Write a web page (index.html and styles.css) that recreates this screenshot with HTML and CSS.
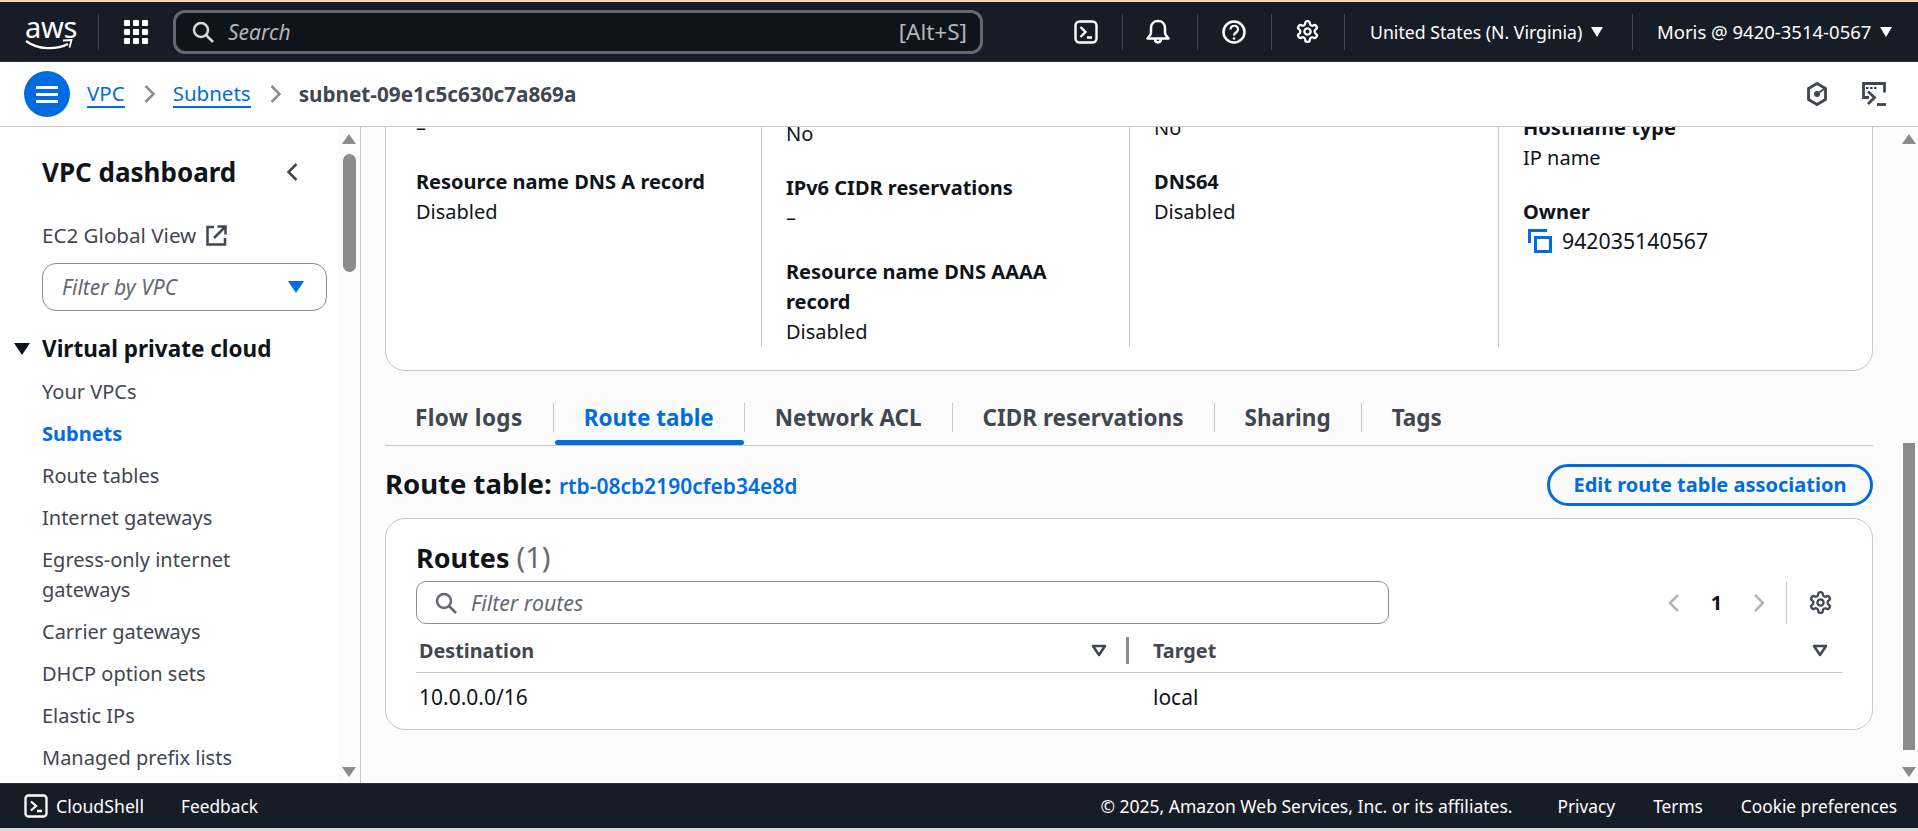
FILE: index.html
```html
<!DOCTYPE html>
<html lang="en">
<head>
    <meta charset="UTF-8">
    <title>Subnet details | VPC Console</title>
    <link rel="stylesheet" href="styles.css">
</head>
<body>
    <!-- top navigation -->
    <header class="top-nav">
        <div class="aws-logo">
            <span class="aws-word">aws</span>
            <svg class="aws-smile" width="48" height="11" viewBox="0 0 48 11"><path d="M1 2c12 9 30 9 42 3" fill="none" stroke="#fff" stroke-width="2.2"/><path d="M38 1.500l8.500-.5-2 7.500" fill="none" stroke="#fff" stroke-width="1.800"/></svg>
        </div>
        <span class="nav-sep sep-logo"></span>
        <svg class="apps-icon" width="24" height="24" viewBox="0 0 24 24" fill="#fff"><rect x="0" y="0" width="6" height="6" rx="1"/><rect x="9" y="0" width="6" height="6" rx="1"/><rect x="18" y="0" width="6" height="6" rx="1"/><rect x="0" y="9" width="6" height="6" rx="1"/><rect x="9" y="9" width="6" height="6" rx="1"/><rect x="18" y="9" width="6" height="6" rx="1"/><rect x="0" y="18" width="6" height="6" rx="1"/><rect x="9" y="18" width="6" height="6" rx="1"/><rect x="18" y="18" width="6" height="6" rx="1"/></svg>
        <div class="global-search">
            <svg width="22" height="22" viewBox="0 0 22 22" fill="none" stroke="#d5dbdb" stroke-width="2.500"><circle cx="9" cy="9" r="7"/><path d="M14 14l7 7"/></svg>
            <span class="search-text">Search</span>
            <span class="search-key">[Alt+S]</span>
        </div>
        <svg class="nav-icon icon-shell" width="24" height="24" viewBox="0 0 24 24" fill="none" stroke="#fff" stroke-width="2.400"><rect x="1.500" y="1.500" width="21" height="21" rx="4"/><path d="M6.500 7l5 5-5 5M13 17.500h5"/></svg>
        <span class="nav-sep sep-a"></span>
        <svg class="nav-icon icon-bell" width="24" height="26" viewBox="0 0 24 26" fill="none" stroke="#fff" stroke-width="2.500" stroke-linejoin="round"><path d="M12 2c-4.500 0-7 3-7 7v5c0 2-2 3.500-3.500 5.500h21C21 17.500 19 16 19 14V9c0-4-2.500-7-7-7z"/><path d="M9 20c0 4.500 6 4.500 6 0"/></svg>
        <span class="nav-sep sep-b"></span>
        <svg class="nav-icon icon-help" width="24" height="24" viewBox="0 0 24 24" fill="none" stroke="#fff" stroke-width="2.500"><circle cx="12" cy="12" r="10.500"/><path d="M8.500 9.500c0-5 7.500-5 7.500 0 0 3-4 3-4 6" stroke-width="2.200"/><circle cx="12" cy="18.500" r="1.300" fill="#fff" stroke="none"/></svg>
        <span class="nav-sep sep-c"></span>
        <svg class="nav-icon icon-gear" width="25" height="25" viewBox="0 0 24 24" fill="none" stroke="#fff" stroke-width="2.200"><path d="M12.220 2h-.44a2 2 0 0 0-2 2v.18a2 2 0 0 1-1 1.730l-.43.25a2 2 0 0 1-2 0l-.15-.08a2 2 0 0 0-2.730.73l-.22.38a2 2 0 0 0 .73 2.730l.15.1a2 2 0 0 1 1 1.720v.51a2 2 0 0 1-1 1.740l-.15.09a2 2 0 0 0-.73 2.730l.22.38a2 2 0 0 0 2.730.73l.15-.08a2 2 0 0 1 2 0l.43.25a2 2 0 0 1 1 1.730V20a2 2 0 0 0 2 2h.44a2 2 0 0 0 2-2v-.18a2 2 0 0 1 1-1.730l.43-.25a2 2 0 0 1 2 0l.15.08a2 2 0 0 0 2.730-.73l.22-.39a2 2 0 0 0-.73-2.730l-.15-.08a2 2 0 0 1-1-1.740v-.5a2 2 0 0 1 1-1.740l.15-.09a2 2 0 0 0 .73-2.730l-.22-.38a2 2 0 0 0-2.730-.73l-.15.08a2 2 0 0 1-2 0l-.43-.25a2 2 0 0 1-1-1.730V4a2 2 0 0 0-2-2z"/><circle cx="12" cy="12" r="3"/></svg>
        <span class="nav-sep sep-d"></span>
        <span class="nav-menu region">United States (N. Virginia)<i class="caret"></i></span>
        <span class="nav-sep sep-e"></span>
        <span class="nav-menu account">Moris @ 9420-3514-0567<i class="caret"></i></span>
    </header>

    <!-- breadcrumbs -->
    <div class="crumb-bar">
        <button class="menu-btn"><span></span><span></span><span></span></button>
        <a class="crumb crumb-first">VPC</a>
        <svg class="crumb-chev" width="12" height="20" viewBox="0 0 12 20" fill="none" stroke="#8c8c94" stroke-width="2.500"><path d="M1.500 2l8 8-8 8"/></svg>
        <a class="crumb">Subnets</a>
        <svg class="crumb-chev" width="12" height="20" viewBox="0 0 12 20" fill="none" stroke="#8c8c94" stroke-width="2.500"><path d="M1.500 2l8 8-8 8"/></svg>
        <span class="crumb-current">subnet-09e1c5c630c7a869a</span>
        <svg class="tool-a" width="22" height="24" viewBox="0 0 22 24" fill="none" stroke="#424650" stroke-width="2.800" stroke-linejoin="round"><path d="M11 1.500l8.500 5v11l-8.500 5-8.500-5v-11z"/><circle cx="11" cy="12" r="3" fill="#424650" stroke="none"/><path d="M11 12l7-5" stroke-width="2"/></svg>
        <svg class="tool-b" width="24" height="24" viewBox="0 0 24 24" fill="none" stroke="#424650" stroke-width="2.800"><path d="M7 15.500H1.500v-14h21v9"/><path d="M4 6h2.500M8 6h2.500M12 6h2.500" stroke-width="2"/><path d="M6 9.500l6.500 6-6.500 6.500"/><path d="M15 22.500h9"/></svg>
    </div>

    <div class="layout">
        <!-- side navigation -->
        <aside class="side-nav">
            <div class="side-content">
                <div class="side-head">
                    <h2>VPC dashboard</h2>
                    <svg width="12" height="20" viewBox="0 0 12 20" fill="none" stroke="#424650" stroke-width="2.500"><path d="M10.500 2l-8 8 8 8"/></svg>
                </div>
                <a class="ec2-link">EC2 Global View
                    <svg width="21" height="21" viewBox="0 0 21 21" fill="none" stroke="#424650" stroke-width="2.500"><path d="M8 2H1.500v17.500H19V13"/><path d="M8 13L19 2M11.500 1.500h8v8"/></svg>
                </a>
                <div class="vpc-filter"><span>Filter by VPC</span><i class="caret-blue"></i></div>
                <h3 class="side-section"><i class="caret-dark"></i>Virtual private cloud</h3>
                <ul class="side-list">
                    <li>Your VPCs</li>
                    <li class="active">Subnets</li>
                    <li>Route tables</li>
                    <li>Internet gateways</li>
                    <li>Egress-only internet gateways</li>
                    <li>Carrier gateways</li>
                    <li>DHCP option sets</li>
                    <li>Elastic IPs</li>
                    <li>Managed prefix lists</li>
                </ul>
            </div>
            <div class="scrollbar side-scroll">
                <i class="arrow-up"></i>
                <span class="thumb"></span>
                <i class="arrow-down"></i>
            </div>
        </aside>

        <!-- main content, scrolled down a bit -->
        <main class="content">
            <div class="content-inner">
                <section class="card details">
                    <div class="detail-col col-one">
                        <div class="field"><p>–</p></div>
                        <div class="field"><strong>Resource name DNS A record</strong><p>Disabled</p></div>
                    </div>
                    <div class="detail-col col-two">
                        <div class="field"><p>No</p></div>
                        <div class="field"><strong>IPv6 CIDR reservations</strong><p>–</p></div>
                        <div class="field"><strong>Resource name DNS AAAA record</strong><p>Disabled</p></div>
                    </div>
                    <div class="detail-col col-three">
                        <div class="field"><p>No</p></div>
                        <div class="field"><strong>DNS64</strong><p>Disabled</p></div>
                    </div>
                    <div class="detail-col col-four">
                        <div class="field"><strong>Hostname type</strong><p>IP name</p></div>
                        <div class="field"><strong>Owner</strong>
                            <p class="owner">
                                <svg width="24" height="24" viewBox="0 0 24 24" fill="none" stroke="#006ce0" stroke-width="3"><path d="M1.500 14V1.500H19"/><rect x="7.500" y="8.500" width="15" height="14"/></svg>
                                942035140567
                            </p>
                        </div>
                    </div>
                </section>

                <nav class="tabs">
                    <a class="tab first">Flow logs</a>
                    <a class="tab active">Route table</a>
                    <a class="tab">Network ACL</a>
                    <a class="tab">CIDR reservations</a>
                    <a class="tab">Sharing</a>
                    <a class="tab last">Tags</a>
                </nav>

                <div class="section-head">
                    <h2>Route table: <a>rtb-08cb2190cfeb34e8d</a></h2>
                    <button class="btn-outline">Edit route table association</button>
                </div>

                <section class="card routes">
                    <h2 class="routes-title">Routes <span>(1)</span></h2>
                    <div class="routes-toolbar">
                        <div class="filter-input">
                            <svg width="22" height="22" viewBox="0 0 22 22" fill="none" stroke="#656871" stroke-width="2.500"><circle cx="9" cy="9" r="7"/><path d="M14 14l7 7"/></svg>
                            <span>Filter routes</span>
                        </div>
                        <div class="pager">
                            <svg width="13" height="20" viewBox="0 0 13 20" fill="none" stroke="#b4b4bb" stroke-width="2.500"><path d="M11 2l-8 8 8 8"/></svg>
                            <b>1</b>
                            <svg width="13" height="20" viewBox="0 0 13 20" fill="none" stroke="#b4b4bb" stroke-width="2.500"><path d="M2 2l8 8-8 8"/></svg>
                            <span class="pager-sep"></span>
                            <svg width="25" height="25" viewBox="0 0 24 24" fill="none" stroke="#424650" stroke-width="2.200"><path d="M12.220 2h-.44a2 2 0 0 0-2 2v.18a2 2 0 0 1-1 1.730l-.43.25a2 2 0 0 1-2 0l-.15-.08a2 2 0 0 0-2.730.73l-.22.38a2 2 0 0 0 .73 2.730l.15.1a2 2 0 0 1 1 1.720v.51a2 2 0 0 1-1 1.740l-.15.09a2 2 0 0 0-.73 2.730l.22.38a2 2 0 0 0 2.730.73l.15-.08a2 2 0 0 1 2 0l.43.25a2 2 0 0 1 1 1.730V20a2 2 0 0 0 2 2h.44a2 2 0 0 0 2-2v-.18a2 2 0 0 1 1-1.730l.43-.25a2 2 0 0 1 2 0l.15.08a2 2 0 0 0 2.730-.73l.22-.39a2 2 0 0 0-.73-2.730l-.15-.08a2 2 0 0 1-1-1.740v-.5a2 2 0 0 1 1-1.740l.15-.09a2 2 0 0 0 .73-2.730l-.22-.38a2 2 0 0 0-2.730-.73l-.15.08a2 2 0 0 1-2 0l-.43-.25a2 2 0 0 1-1-1.730V4a2 2 0 0 0-2-2z"/><circle cx="12" cy="12" r="3"/></svg>
                        </div>
                    </div>
                    <div class="route-row route-header">
                        <div class="cell first">Destination
                            <svg class="sort-icon" width="16" height="13" viewBox="0 0 16 13" fill="none" stroke="#424650" stroke-width="2.500"><path d="M2 2h12l-6 9z" stroke-linejoin="round"/></svg>
                            <span class="col-resize"></span>
                        </div>
                        <div class="cell">Target
                            <svg class="sort-icon" width="16" height="13" viewBox="0 0 16 13" fill="none" stroke="#424650" stroke-width="2.500"><path d="M2 2h12l-6 9z" stroke-linejoin="round"/></svg>
                        </div>
                    </div>
                    <div class="route-row">
                        <div class="cell first">10.0.0.0/16</div>
                        <div class="cell">local</div>
                    </div>
                </section>
            </div>
            <div class="scrollbar main-scroll">
                <i class="arrow-up"></i>
                <span class="thumb"></span>
                <i class="arrow-down"></i>
            </div>
        </main>
    </div>

    <footer class="footer">
        <svg width="24" height="24" viewBox="0 0 24 24" fill="none" stroke="#fff" stroke-width="2.300"><rect x="1.500" y="1.500" width="21" height="21" rx="3"/><path d="M7 7.500l5 4.500-5 4.500M13 17h5"/></svg>
        <span class="foot-shell">CloudShell</span>
        <span class="foot-feedback">Feedback</span>
        <span class="foot-copy">© 2025, Amazon Web Services, Inc. or its affiliates.</span>
        <span class="foot-link first">Privacy</span>
        <span class="foot-link">Terms</span>
        <span class="foot-link">Cookie preferences</span>
    </footer>
</body>
</html>
```

FILE: styles.css
```css
* { margin: 0; padding: 0; box-sizing: border-box; }

body {
    font-family: "Noto Sans", "Open Sans", sans-serif;
    font-size: 20px;
    color: #0f141a;
    height: 831px;
    overflow: hidden;
    background: #dcdcdc;
    border-top: 2px solid #eed6b2;
}

ul { list-style: none; }
a { color: #006ce0; }

/* top nav */
.top-nav {
    height: 60px;
    background: #161d26;
    display: flex;
    align-items: center;
    color: #fff;
    border-bottom: 1px solid #2a313b;
}

.aws-logo {
    width: 50px;
    margin-left: 25px;
    position: relative;
    height: 36px;
}

.aws-word {
    display: block;
    font-size: 29px;
    line-height: 26px;
    letter-spacing: -0.3px;
    color: #fff;
    text-align: center;
    width: 48px;
}

.aws-smile {
    position: absolute;
    left: 0;
    top: 25px;
}

.nav-sep {
    width: 1px;
    height: 36px;
    background: #424650;
}

.sep-logo { margin-left: 23px; }
.apps-icon { margin-left: 25px; }

.global-search {
    width: 810px;
    height: 44px;
    margin-left: 25px;
    background: #0f141a;
    border: 3px solid #656871;
    border-radius: 12px;
    display: flex;
    align-items: center;
    padding: 0 13px 0 16px;
}

.search-text {
    font-style: italic;
    font-size: 21px;
    color: #b4b4bb;
    margin-left: 14px;
    flex: 1;
}

.search-key {
    font-size: 22.500px;
    color: #b4b4bb;
}

.icon-shell { margin-left: 91px; }
.sep-a { margin-left: 24px; }
.icon-bell { margin-left: 23px; }
.sep-b { margin-left: 27px; }
.icon-help { margin-left: 24px; }
.sep-c { margin-left: 25px; }
.icon-gear { margin-left: 23px; }
.sep-d { margin-left: 24px; }

.nav-menu {
    display: flex;
    align-items: center;
    font-size: 17.700px;
    white-space: nowrap;
}

.region { margin-left: 25px; width: 262px; }
.account { margin-left: 24px; font-size: 18.500px; }

.caret {
    display: block;
    margin-left: 9px;
    border-left: 6px solid transparent;
    border-right: 6px solid transparent;
    border-top: 10px solid #fff;
}

/* breadcrumbs */
.crumb-bar {
    height: 65px;
    background: #fff;
    border-bottom: 1px solid #c6c6cd;
    display: flex;
    align-items: center;
    padding-left: 24px;
}

.menu-btn {
    width: 46px;
    height: 46px;
    border-radius: 50%;
    border: none;
    background: #006ce0;
    display: flex;
    flex-direction: column;
    align-items: center;
    justify-content: center;
    gap: 4px;
}

.menu-btn span {
    display: block;
    width: 22px;
    height: 3px;
    background: #fff;
}

.crumb {
    color: #006ce0;
    border-bottom: 2px solid #006ce0;
    line-height: 26px;
    font-size: 20.500px;
}

.crumb-first { margin-left: 17px; }
.crumb-chev { margin: 0 17px 0 19px; }

.crumb-current {
    font-size: 20.700px;
    font-weight: 700;
    color: #424650;
    flex: 1;
}

.tool-a { margin-right: 34px; }
.tool-b { margin-right: 32px; }

/* layout */
.layout {
    display: flex;
    height: 656px;
    background: #fbfbfb;
}

.side-nav {
    width: 361px;
    flex: none;
    display: flex;
    background: #fff;
    border-right: 1px solid #c6c6cd;
    overflow: hidden;
}

.side-content {
    width: 338px;
    flex: none;
    overflow: hidden;
}

.scrollbar {
    flex: none;
    display: flex;
    flex-direction: column;
    align-items: center;
    background: #fbfbfb;
}

.side-scroll { width: 22px; }
.main-scroll { width: 18px; }

.arrow-up, .arrow-down {
    display: block;
    border-left: 7px solid transparent;
    border-right: 7px solid transparent;
}

.arrow-up {
    border-bottom: 10px solid #8b8b8b;
    margin-top: 7px;
}

.arrow-down {
    border-top: 10px solid #8b8b8b;
    margin-top: auto;
    margin-bottom: 6px;
}

.thumb {
    display: block;
    width: 13px;
    background: #8b8b8b;
    border-radius: 7px;
}

.side-scroll .thumb { height: 118px; margin-top: 10px; }
.main-scroll .thumb { height: 307px; margin-top: 299px; border-radius: 0; width: 12px; }

.side-head {
    display: flex;
    align-items: center;
    justify-content: space-between;
    padding: 27px 40px 0 42px;
}

.side-head h2 {
    font-size: 26px;
    line-height: 36px;
    font-weight: 700;
}

.ec2-link {
    display: flex;
    align-items: center;
    gap: 10px;
    margin: 30px 0 0 42px;
    color: #424650;
    font-size: 20.600px;
    line-height: 30px;
}

.vpc-filter {
    width: 285px;
    height: 48px;
    margin: 13px 0 0 42px;
    border: 1px solid #8c8c94;
    border-radius: 14px;
    display: flex;
    align-items: center;
    justify-content: space-between;
    padding: 0 22px 0 19px;
    font-size: 21px;
    font-style: italic;
    color: #656871;
}

.caret-blue {
    display: block;
    border-left: 8px solid transparent;
    border-right: 8px solid transparent;
    border-top: 12px solid #006ce0;
}

.side-section {
    display: flex;
    align-items: center;
    font-size: 22.500px;
    line-height: 30px;
    font-weight: 700;
    margin: 23px 0 0 14px;
}

.caret-dark {
    display: block;
    margin-right: 12px;
    border-left: 8px solid transparent;
    border-right: 8px solid transparent;
    border-top: 12px solid #0f141a;
}

.side-list {
    margin-top: 13px;
    padding: 0 40px 0 42px;
}

.side-list li {
    line-height: 30px;
    margin-bottom: 12px;
    color: #424650;
}

.side-list li.active {
    color: #006ce0;
    font-weight: 700;
}

/* main */
.content {
    flex: 1;
    display: flex;
    overflow: hidden;
}

.content-inner {
    flex: 1;
    padding: 0 27px 0 24px;
    overflow: hidden;
}

.card {
    background: #fff;
    border: 1px solid #c6c6cd;
    border-radius: 20px;
}

.details {
    margin-top: -30px;
    height: 274px;
    padding: 0 0 23px 6px;
    display: grid;
    grid-template-columns: 369px 368px 369px 1fr;
}

.detail-col {
    padding-left: 24px;
    border-left: 1px solid #c6c6cd;
    display: flex;
    flex-direction: column;
    gap: 24px;
    line-height: 30px;
}

.col-one { border-left: none; padding: 15px 0 0 24px; }
.col-two { padding-top: 21px; }
.col-three { padding-top: 15px; }
.col-four { padding-top: 15px; }

.field strong {
    display: block;
    font-weight: 700;
}

.col-two .field strong { width: 290px; }

.owner {
    display: flex;
    align-items: center;
    gap: 10px;
    margin-top: -1px;
    padding-left: 5px;
    font-size: 21.300px;
}

/* tabs */
.tabs {
    display: flex;
    margin-top: 32px;
    padding-bottom: 13px;
    border-bottom: 1px solid #c6c6cd;
}

.tab {
    position: relative;
    font-size: 22.500px;
    font-weight: 700;
    line-height: 29px;
    color: #424650;
    padding: 0 30px;
    border-right: 1px solid #c6c6cd;
    white-space: nowrap;
}

.tab.first { letter-spacing: 0.4px; }
.tab.last { border-right: none; }
.tab.active { color: #006ce0; }

.tab.active::after {
    content: "";
    position: absolute;
    left: 1px;
    right: 0;
    bottom: -13px;
    height: 5px;
    background: #006ce0;
    border-radius: 3px;
}

/* route table section */
.section-head {
    display: flex;
    align-items: center;
    justify-content: space-between;
    margin-top: 18px;
}

.section-head h2 {
    font-size: 27.500px;
    font-weight: 700;
    line-height: 36px;
}

.section-head h2 a {
    font-size: 21px;
    font-weight: 600;
}

.btn-outline {
    height: 42px;
    width: 326px;
    border: 3px solid #006ce0;
    border-radius: 21px;
    padding-bottom: 2px;
    background: transparent;
    color: #006ce0;
    font-family: inherit;
    font-size: 20px;
    font-weight: 700;
}

.routes {
    margin-top: 12px;
    height: 212px;
    padding: 20px 30px 0;
}

.routes-title {
    font-size: 27px;
    font-weight: 700;
    line-height: 36px;
}

.routes-title span {
    font-size: 29px;
    font-weight: 400;
    color: #656871;
}

.routes-toolbar {
    display: flex;
    justify-content: space-between;
    align-items: center;
    margin-top: 5px;
}

.filter-input {
    width: 973px;
    height: 43px;
    border: 1px solid #8c8c94;
    border-radius: 10px;
    display: flex;
    align-items: center;
    gap: 14px;
    padding-left: 18px;
    font-size: 21.300px;
    font-style: italic;
    color: #656871;
}

.pager {
    display: flex;
    align-items: center;
    margin-right: 9px;
}

.pager b {
    width: 73px;
    text-align: center;
    font-weight: 700;
}

.pager-sep {
    width: 1px;
    height: 42px;
    background: #c6c6cd;
    margin: 0 21px 0 20px;
}

.route-row {
    display: flex;
    height: 47px;
    align-items: center;
    font-size: 21px;
}

.route-header {
    height: 49px;
    padding-top: 4px;
    border-bottom: 1px solid #c6c6cd;
    font-size: 19.800px;
    font-weight: 700;
    color: #424650;
}

.cell {
    flex: 1;
    display: flex;
    align-items: center;
    padding-right: 14px;
}

.cell.first {
    flex: none;
    width: 737px;
    padding: 0 24px 0 3px;
}

.sort-icon { margin-left: auto; }

.col-resize {
    width: 3px;
    height: 27px;
    background: #8c8c94;
    margin-left: 19px;
}

/* footer */
.footer {
    height: 45px;
    background: #161d26;
    color: #fff;
    display: flex;
    align-items: center;
    padding-left: 24px;
    font-size: 17.300px;
    border-top: 1px solid #2a313b;
}

.foot-shell { margin-left: 8px; font-size: 17.700px; }
.foot-feedback { margin-left: 37px; flex: 1; }
.foot-copy { font-size: 17.500px; }
.foot-link { margin-left: 38px; }
.foot-link.first { margin-left: 45px; }
.foot-link:last-child { margin-right: 21px; }
```
